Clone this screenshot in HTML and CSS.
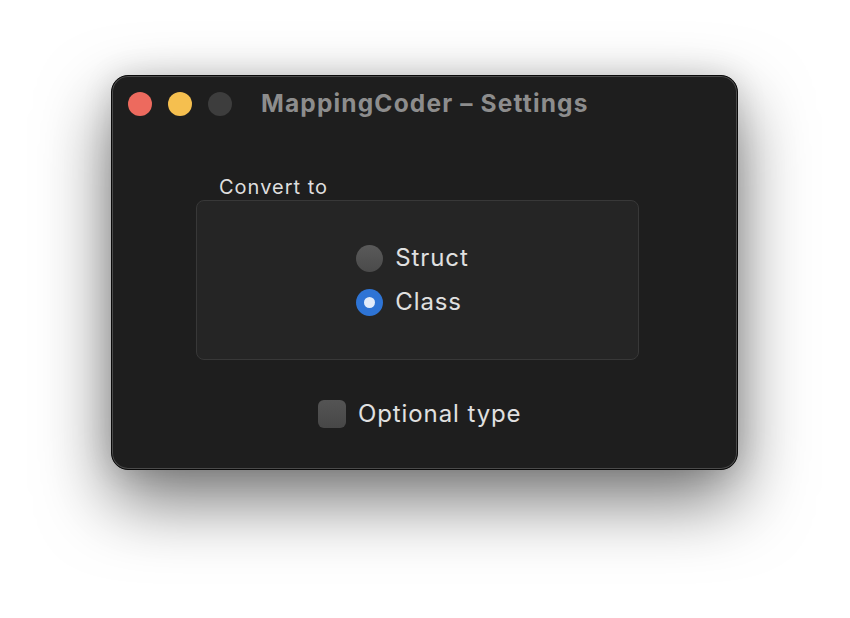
FILE: index.html
```html
<!DOCTYPE html>
<html>
<head>
<meta charset="utf-8">
<link rel="stylesheet" href="styles.css">
</head>
<body>
<div class="stage">
  <div class="window">
    <div class="titlebar">
      <div class="lights">
        <span class="light red"></span>
        <span class="light yellow"></span>
        <span class="light gray"></span>
      </div>
      <div class="title">MappingCoder – Settings</div>
    </div>
    <div class="content">
      <div class="group">
        <div class="group-label">Convert to</div>
        <div class="group-box">
          <div class="radios">
            <div class="radio-row"><span class="radio"></span><span class="opt">Struct</span></div>
            <div class="radio-row"><span class="radio on"></span><span class="opt">Class</span></div>
          </div>
        </div>
      </div>
      <div class="check-row"><span class="checkbox"></span><span class="opt">Optional type</span></div>
    </div>
  </div>
</div>
</body>
</html>
```

FILE: styles.css
```css
html, body {
  margin: 0;
  padding: 0;
  background: #ffffff;
}
body {
  width: 850px;
  height: 618px;
  overflow: hidden;
  font-family: Inter, "Noto Sans", "Liberation Sans", sans-serif;
}
.stage {
  padding-top: 75px;
  padding-left: 111px;
}
.window {
  width: 627px;
  height: 395px;
  box-sizing: border-box;
  border: 1px solid #0a0a0a;
  border-radius: 17px;
  background: #1e1e1e;
  box-shadow: inset 0 0 0 1px #4b4b4b, 0 30px 70px rgba(0, 0, 0, 0.55), 0 0 30px rgba(0,0,0,0.12);
  display: flex;
  flex-direction: column;
}
.titlebar {
  height: 56px;
  display: flex;
  align-items: center;
  padding-left: 16px;
}
.lights {
  display: flex;
  gap: 16px;
}
.light {
  width: 24px;
  height: 24px;
  border-radius: 50%;
  display: block;
}
.red { background: #ed6a5e; }
.yellow { background: #f5bf4f; }
.gray { background: #3d3d3d; }
.title {
  margin-left: 29px;
  margin-top: -2px;
  font-size: 24.5px;
  font-weight: 700;
  color: #8d8d8d;
  letter-spacing: 1.15px;
}
.content {
  display: flex;
  flex-direction: column;
}
.group {
  margin-left: 84px;
  width: 443px;
  margin-top: 42px;
}
.group-label {
  padding-left: 23px;
  font-size: 20px;
  line-height: 26px;
  color: #dedede;
  height: 26px;
  letter-spacing: 1px;
}
.group-box {
  height: 160px;
  box-sizing: border-box;
  border: 1px solid #383838;
  border-radius: 8px;
  background: #252525;
  display: flex;
  align-items: center;
  justify-content: center;
}
.radios {
  display: flex;
  flex-direction: column;
  gap: 14px;
  margin-right: 10px;
}
.radio-row, .check-row {
  display: flex;
  align-items: center;
}
.radio {
  width: 27px;
  height: 27px;
  border-radius: 50%;
  background: linear-gradient(#5a5a5a, #4a4a4a);
  box-sizing: border-box;
  display: block;
}
.radio.on {
  background: #2e74d5;
  position: relative;
}
.radio.on::after {
  content: "";
  position: absolute;
  left: 8px;
  top: 8px;
  width: 11px;
  height: 11px;
  border-radius: 50%;
  background: #e2ecfa;
}
.opt {
  margin-left: 12px;
  font-size: 24px;
  line-height: 30px;
  color: #e0e0e0;
  letter-spacing: 0.9px;
}
.check-row {
  margin-top: 39px;
  margin-left: 206px;
}
.checkbox {
  width: 28px;
  height: 28px;
  border-radius: 6px;
  background: linear-gradient(#545454, #474747);
  display: block;
}
```
